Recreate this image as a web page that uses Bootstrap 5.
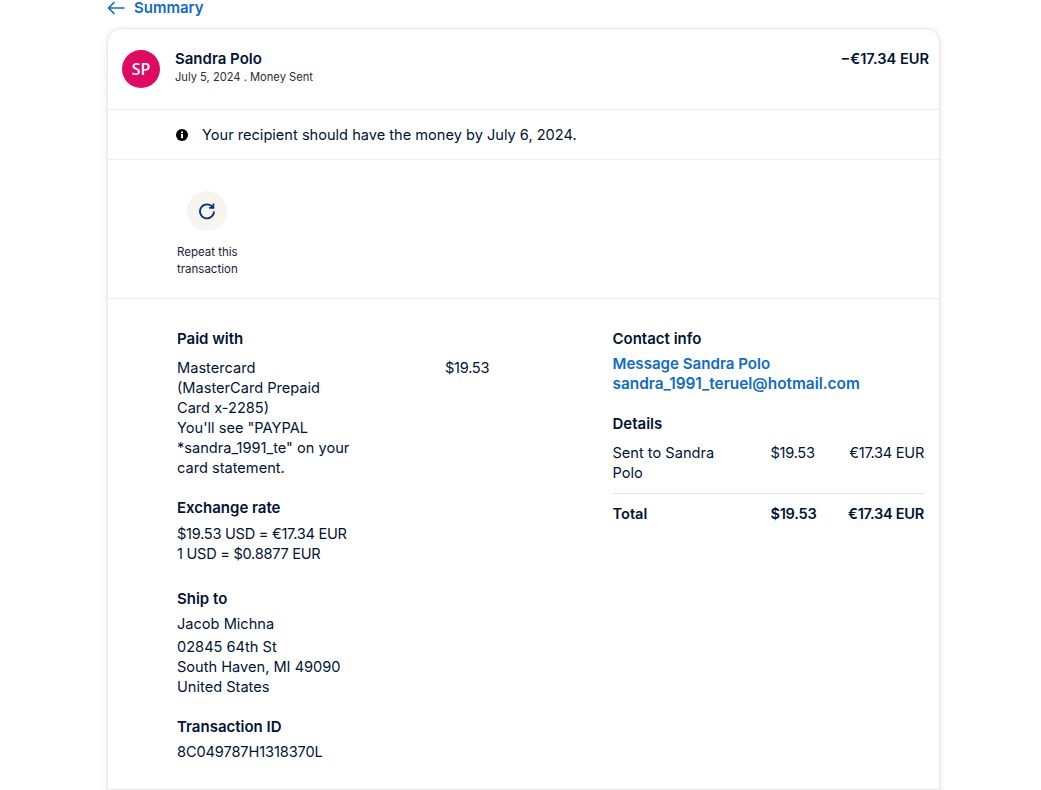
<!DOCTYPE html>
<html lang="en">
<head>
<meta charset="utf-8">
<title>Transaction details</title>
<link href="https://cdn.jsdelivr.net/npm/bootstrap@5.3.0/dist/css/bootstrap.min.css" rel="stylesheet">
<style>
html,body{height:790px;overflow:hidden;background:#fff}
body{font-family:Inter,"Liberation Sans",sans-serif;font-size:14.6px;line-height:20px;color:#001435}
.page-wrap{width:833px;margin-left:107px}
.back-link{height:28px;color:#0f6bcb;font-weight:600;font-size:15px;line-height:16px;text-decoration:none;gap:9px}
.back-link svg{margin-top:1px}
.txn-card{border:1px solid #e8e8e8;border-radius:14px;box-shadow:0 1px 6px rgba(0,0,0,.1);height:800px}
.txn-head{height:81px;padding:21px 10px 0 14px;border-bottom:1px solid #ebebeb}
.avatar{width:38px;height:38px;background:#e00a63;color:#fff;font-family:"Open Sans",sans-serif;font-weight:600;font-size:16px;margin-right:15px}
.who{font-weight:600;font-size:15px;line-height:18px}
.sub{font-size:11.15px;line-height:18px;color:#2c2e2f}
.amount{font-weight:600;font-size:14.6px;line-height:18px}
.notice{height:50px;padding-left:68px;gap:14px;border-bottom:1px solid #f0eee6}
.repeat{height:139px;padding:31px 0 0 69px;border-bottom:1px solid #ebebeb}
.repeat-btn{width:60px}
.circle{width:40px;height:40px;background:#f7f5f0;margin-bottom:13px}
.repeat-label{font-size:11.5px;line-height:17px;color:#1a2238;align-self:flex-start;white-space:pre-line}
.details{height:491px;padding:30px 15px 0 69px;border-bottom:1px solid #e8e8e8}
.left-col{width:435.5px;flex:none}
.right-col{flex:1}
.ttl{font-weight:600;font-size:15px;line-height:20px;margin:0 0 6px}
.ttl-paid{margin-bottom:9px}
.ttl-tight{margin-bottom:5px}
.ttl-details{margin-bottom:9px}
.pay-text{width:180px;flex:none;margin-right:88px}
.blk{margin-bottom:20px}
.blk-rate{margin-bottom:25px}
.ship-name{margin-bottom:3px}
.plain-link{display:block;color:#0f6bcb;font-weight:600;font-size:15.4px;text-decoration:none;white-space:nowrap}
.msg-link{font-size:15.1px}
.nums{letter-spacing:-.28px}
.nums-light{letter-spacing:-.12px}
.dt-row>:first-child{width:128px;flex:none;margin-right:30px}
.dt-row>:nth-child(2){width:70px;flex:none}
.dt-row>:last-child{flex:1;text-align:right;white-space:nowrap}
.dt-total{font-weight:600;border-top:1px solid #e6e6e6;margin-top:10px;padding-top:10px}
</style>
</head>
<body>
<div class="page-wrap">
  <a href="#" class="back-link d-flex align-items-start">
    <svg width="18" height="14" viewBox="0 0 18 14" fill="none" stroke="#0f6bcb" stroke-width="1.6"><path d="M17.5 7H2M7.500 1 1.600 7l5.900 6"/></svg>
    <span>Summary</span>
  </a>
  <div class="txn-card bg-white">
    <div class="txn-head d-flex">
      <div class="avatar rounded-circle d-flex align-items-center justify-content-center flex-shrink-0">SP</div>
      <div class="flex-grow-1">
        <div class="who">Sandra Polo</div>
        <div class="sub">July 5, 2024 . Money Sent</div>
      </div>
      <div class="amount">−€17.34 EUR</div>
    </div>
    <div class="notice d-flex align-items-center">
      <svg width="12" height="12" viewBox="0 0 12 12"><circle cx="6" cy="6" r="6" fill="#000"/><rect x="5" y="5" width="2" height="4.200" fill="#fff"/><circle cx="6" cy="3.300" r="1.100" fill="#fff"/></svg>
      <span>Your recipient should have the money by July 6, 2024.</span>
    </div>
    <div class="repeat">
      <div class="repeat-btn d-flex flex-column align-items-center">
        <div class="circle rounded-circle d-flex align-items-center justify-content-center">
          <svg width="18" height="18" viewBox="0 0 18 18" fill="none" stroke="#003087" stroke-width="1.8"><path d="M14.600 5.200A7 7 0 1 0 16 9.500"/><path d="M15.400 1.600v4.200h-4.200"/></svg>
        </div>
        <div class="repeat-label">Repeat this
transaction</div>
      </div>
    </div>
    <div class="details d-flex">
      <div class="left-col">
        <div class="blk">
          <div class="ttl ttl-paid">Paid with</div>
          <div class="d-flex">
            <div class="pay-text">Mastercard<br>(MasterCard Prepaid<br>Card x-2285)<br>You'll see "PAYPAL<br>*sandra_1991_te" on your<br>card statement.</div>
            <div class="nums">$19.53</div>
          </div>
        </div>
        <div class="blk blk-rate">
          <div class="ttl">Exchange rate</div>
          <div class="nums">$19.53 USD = €17.34 EUR<br>1 USD = $0.8877 EUR</div>
        </div>
        <div class="blk">
          <div class="ttl ttl-tight">Ship to</div>
          <div class="ship-name">Jacob Michna</div>
          <div>02845 64th St<br>South Haven, MI 49090<br>United States</div>
        </div>
        <div class="blk">
          <div class="ttl ttl-tight">Transaction ID</div>
          <div class="nums-light">8C049787H1318370L</div>
        </div>
      </div>
      <div class="right-col">
        <div class="blk">
          <div class="ttl ttl-tight">Contact info</div>
          <a href="#" class="plain-link msg-link">Message Sandra Polo</a>
          <a href="#" class="plain-link">sandra_1991_teruel@hotmail.com</a>
        </div>
        <div class="ttl ttl-details">Details</div>
        <div class="dt-row d-flex"><div>Sent to Sandra Polo</div><div class="nums">$19.53</div><div class="nums">€17.34 EUR</div></div>
        <div class="dt-row dt-total d-flex"><div>Total</div><div class="nums">$19.53</div><div class="nums">€17.34 EUR</div></div>
      </div>
    </div>
  </div>
</div>
</body>
</html>
